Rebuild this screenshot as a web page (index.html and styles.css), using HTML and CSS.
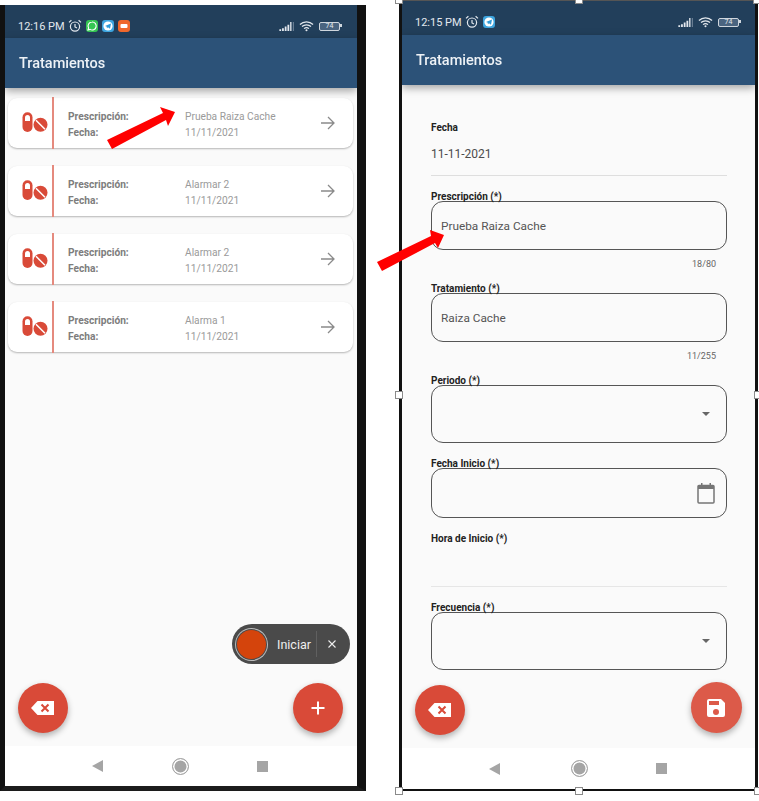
FILE: index.html
```html
<!DOCTYPE html>
<html lang="en">
<head>
  <meta charset="UTF-8">
  <meta name="viewport" content="width=device-width, initial-scale=1.0">
  <title>Tratamientos</title>
  <link rel="stylesheet" href="styles.css">
</head>
<body>
<div class="sheet">

  <div class="phone phone-list">
    <div class="status-bar">
      <span class="clock">12:16 PM</span>
      <svg class="alarm" viewBox="0 0 14 14"><circle cx="7" cy="7.600" r="4.600" fill="none" stroke="#e3e8ee" stroke-width="1.200"/><path d="M7 5v3l2 1M1 3.400 3.400 1.200M13 3.400 10.600 1.200" fill="none" stroke="#e3e8ee" stroke-width="1.200"/></svg>
      <span class="app-dot app-green"><svg viewBox="0 0 12 12"><path d="M6 2a4 4 0 0 0-3.400 6L2 10l2.100-.6A4 4 0 1 0 6 2z" fill="none" stroke="#fff" stroke-width="1.100"/></svg></span>
      <span class="app-dot app-blue"><svg viewBox="0 0 12 12"><circle cx="6" cy="6" r="4.600" fill="#fff"/><path d="M3 6l6-2.400-1 5.200-2-1.500-1 1-.4-1.700z" fill="#2f9bd8"/></svg></span>
      <span class="app-dot app-orange"><svg viewBox="0 0 12 12"><rect x="2.500" y="4" width="7" height="4" rx="1" fill="#fff"/></svg></span>
      <span class="status-right">
        <svg class="signal" viewBox="0 0 17 10"><path d="M0 8h2v2H0zM3 7h2v3H3zM6 5h2v5H6zM9 3h2v7H9zM12 0h1.500v10H12z" fill="#e3e8ee"/><path d="M15 0h1v10h-1z" fill="#7f92a5"/></svg>
        <svg class="wifi" viewBox="0 0 16 12"><path d="M1 4.400a10 10 0 0 1 14 0M3.200 6.600a7 7 0 0 1 9.600 0M5.400 8.800a4 4 0 0 1 5.200 0" fill="none" stroke="#e3e8ee" stroke-width="1.300"/><circle cx="8" cy="10.600" r="1.100" fill="#e3e8ee"/></svg>
        <span class="battery">74</span>
      </span>
    </div>
    <header class="app-bar">Tratamientos</header>

    <main class="content list-content">
      <div class="card">
        <div class="card-icon"><svg class="pills" viewBox="0 0 26 20"><use href="#pills"/></svg></div>
        <div class="card-labels"><b>Prescripción:</b><b>Fecha:</b></div>
        <div class="card-values"><span>Prueba Raiza Cache</span><span>11/11/2021</span></div>
        <svg class="go" viewBox="0 0 16 16"><use href="#go"/></svg>
      </div>
      <div class="card">
        <div class="card-icon"><svg class="pills" viewBox="0 0 26 20"><use href="#pills"/></svg></div>
        <div class="card-labels"><b>Prescripción:</b><b>Fecha:</b></div>
        <div class="card-values"><span>Alarmar 2</span><span>11/11/2021</span></div>
        <svg class="go" viewBox="0 0 16 16"><use href="#go"/></svg>
      </div>
      <div class="card">
        <div class="card-icon"><svg class="pills" viewBox="0 0 26 20"><use href="#pills"/></svg></div>
        <div class="card-labels"><b>Prescripción:</b><b>Fecha:</b></div>
        <div class="card-values"><span>Alarmar 2</span><span>11/11/2021</span></div>
        <svg class="go" viewBox="0 0 16 16"><use href="#go"/></svg>
      </div>
      <div class="card">
        <div class="card-icon"><svg class="pills" viewBox="0 0 26 20"><use href="#pills"/></svg></div>
        <div class="card-labels"><b>Prescripción:</b><b>Fecha:</b></div>
        <div class="card-values"><span>Alarma 1</span><span>11/11/2021</span></div>
        <svg class="go" viewBox="0 0 16 16"><use href="#go"/></svg>
      </div>

      <div class="timer">
        <span class="timer-record"></span>
        <span class="timer-text">Iniciar</span>
        <svg class="timer-close" viewBox="0 0 10 10"><path d="M1.500 1.500l7 7M8.500 1.500l-7 7" stroke="#eee" stroke-width="1.100" fill="none"/></svg>
      </div>
      <button class="fab fab-left-list"><svg viewBox="0 0 24 24"><use href="#backspace"/></svg></button>
      <button class="fab fab-right-list"><svg viewBox="0 0 24 24"><path d="M12 5.500v13M5.500 12h13" stroke="#fff" stroke-width="2" fill="none"/></svg></button>
    </main>

    <nav class="nav-bar nav-list">
      <span class="nav-back"></span>
      <span class="nav-home"></span>
      <span class="nav-square"></span>
    </nav>
  </div>

  <div class="phone phone-form">
    <div class="status-bar">
      <span class="clock">12:15 PM</span>
      <svg class="alarm" viewBox="0 0 14 14"><circle cx="7" cy="7.600" r="4.600" fill="none" stroke="#e3e8ee" stroke-width="1.200"/><path d="M7 5v3l2 1M1 3.400 3.400 1.200M13 3.400 10.600 1.200" fill="none" stroke="#e3e8ee" stroke-width="1.200"/></svg>
      <span class="app-dot app-blue"><svg viewBox="0 0 12 12"><circle cx="6" cy="6" r="4.600" fill="#fff"/><path d="M3 6l6-2.400-1 5.200-2-1.500-1 1-.4-1.700z" fill="#2f9bd8"/></svg></span>
      <span class="status-right">
        <svg class="signal" viewBox="0 0 17 10"><path d="M0 8h2v2H0zM3 7h2v3H3zM6 5h2v5H6zM9 3h2v7H9zM12 0h1.500v10H12z" fill="#e3e8ee"/><path d="M15 0h1v10h-1z" fill="#7f92a5"/></svg>
        <svg class="wifi" viewBox="0 0 16 12"><path d="M1 4.400a10 10 0 0 1 14 0M3.200 6.600a7 7 0 0 1 9.600 0M5.400 8.800a4 4 0 0 1 5.200 0" fill="none" stroke="#e3e8ee" stroke-width="1.300"/><circle cx="8" cy="10.600" r="1.100" fill="#e3e8ee"/></svg>
        <span class="battery">74</span>
      </span>
    </div>
    <header class="app-bar">Tratamientos</header>

    <main class="content form-content">
      <label class="field-label">Fecha</label>
      <div class="plain-value">11-11-2021</div>
      <hr class="rule">

      <label class="field-label gap-top">Prescripción (*)</label>
      <div class="box">Prueba Raiza Cache</div>
      <div class="counter">18/80</div>

      <label class="field-label gap-small">Tratamiento (*)</label>
      <div class="box">Raiza Cache</div>
      <div class="counter">11/255</div>

      <label class="field-label gap-small">Periodo (*)</label>
      <div class="box box-tall"><span class="caret"></span></div>

      <label class="field-label gap-top">Fecha Inicio (*)</label>
      <div class="box box-date">
        <svg class="calendar" viewBox="0 0 20 22"><path d="M3 3.500h14a1 1 0 0 1 1 1V20a1 1 0 0 1-1 1H3a1 1 0 0 1-1-1V4.500a1 1 0 0 1 1-1z" fill="none" stroke="#757575" stroke-width="1.500"/><path d="M2 3.500h16v3.500H2zM5 1h1.500v3H5zM13.500 1H15v3h-1.500z" fill="#757575"/></svg>
      </div>

      <label class="field-label gap-top">Hora de Inicio (*)</label>
      <hr class="rule rule-hour">

      <label class="field-label gap-top">Frecuencia (*)</label>
      <div class="box box-tall"><span class="caret"></span></div>

      <button class="fab fab-left-form"><svg viewBox="0 0 24 24"><use href="#backspace"/></svg></button>
      <button class="fab fab-save"><svg viewBox="0 0 24 24"><path d="M17 3H5a2 2 0 0 0-2 2v14a2 2 0 0 0 2 2h14a2 2 0 0 0 2-2V7zm-5 16a3 3 0 1 1 0-6 3 3 0 0 1 0 6zm3-10H5V5h10z" fill="#fff"/></svg></button>
    </main>

    <nav class="nav-bar nav-form">
      <span class="nav-back"></span>
      <span class="nav-home"></span>
      <span class="nav-square"></span>
    </nav>
  </div>

  <!-- drawn over the screenshots -->
  <svg class="overlay" viewBox="0 0 759 801">
    <path d="M107 140 163 113 160 107 175 112 168 126 166 120 112 149z" fill="#f00"/>
    <path d="M377 262 431 236 430 230 444 235 438 248 435 243 382 271z" fill="#f00"/>
  </svg>
  <i class="handle handle-a"></i>
  <i class="handle handle-b"></i>
  <i class="handle handle-c"></i>
  <i class="handle handle-d"></i>
  <i class="handle handle-e"></i>
  <i class="handle handle-f"></i>
  <i class="handle handle-g"></i>
  <i class="handle handle-h"></i>
</div>

<svg class="defs" width="0" height="0">
  <defs>
    <g id="pills">
      <path d="M.5 5.200a5 5 0 0 1 10 0V15a5 5 0 0 1-10 0z" fill="#d94a38"/>
      <path d="M3 5.500a2.500 2.500 0 0 1 5 0V9H3z" fill="#fff"/>
      <circle cx="18.500" cy="12.800" r="7" fill="#d94a38"/>
      <path d="M14 8.300l9 9" stroke="#fff" stroke-width="1.500"/>
    </g>
    <path id="go" d="M1 8h13M8 2l6 6-6 6" fill="none" stroke="#8a8a8a" stroke-width="1.300"/>
    <g id="backspace">
      <path d="M23 5H6.500L0 12l6.500 7H23z" fill="#fff"/>
      <path d="M10.500 8.500l7 7M17.500 8.500l-7 7" stroke="#d94a38" stroke-width="2"/>
    </g>
  </defs>
</svg>
</body>
</html>
```

FILE: styles.css
```css
*{
  box-sizing: border-box;
}
html, body{
  margin: 0;
  padding: 0;
  background: #fff;
}
body{
  font-family: Roboto, "Liberation Sans", sans-serif;
}
.sheet{
  position: relative;
  width: 759px;
  height: 801px;
  overflow: hidden;
  display: flex;
  align-items: flex-start;
}
.defs{
  position: absolute;
}

/* phones */
.phone{
  display: flex;
  flex-direction: column;
  overflow: hidden;
  filter: blur(0.4px);
}
.phone-list{
  width: 366px;
  height: 786px;
  margin-top: 5px;
  border-left: 5px solid #111;
  border-right: 9px solid #111;
  border-bottom: 5px solid #1c1c1c;
}
.phone-form{
  width: 359px;
  height: 791px;
  margin-left: 33px;
  margin-top: 0;
  border: 3px solid #111;
  border-top: 1px solid #555;
  border-bottom: 2px solid #111;
}
.status-bar{
  height: 33px;
  flex: none;
  display: flex;
  align-items: center;
  padding: 9px 15px 0 13px;
  background: #223f5b;
  color: #e3e8ee;
  font-size: 11px;
}
.phone-form .status-bar{
  height: 34px;
  padding: 8px 14px 0 13px;
}
.clock{
  margin-right: 3px;
}
.alarm{
  width: 14px;
  height: 14px;
  margin-right: 4px;
}
.app-dot{
  width: 12px;
  height: 12px;
  margin-right: 4px;
  border-radius: 3px;
  display: block;
}
.app-dot svg{
  display: block;
}
.app-green{
  background: #35c653;
}
.app-blue{
  background: #3ea6e0;
}
.app-orange{
  background: #f0682c;
}
.status-right{
  margin-left: auto;
  display: flex;
  align-items: center;
  gap: 4px;
}
.signal{
  width: 16px;
  height: 9px;
}
.wifi{
  width: 15px;
  height: 12px;
}
.battery{
  position: relative;
  width: 21px;
  height: 9px;
  margin-left: 1px;
  margin-right: 2px;
  border: 1px solid #cfd6dd;
  border-radius: 2px;
  color: #e3e8ee;
  background: #4a6480;
  font-size: 7px;
  line-height: 7px;
  text-align: center;
}
.battery::after{
  content: "";
  position: absolute;
  right: -3px;
  top: 1px;
  width: 2px;
  height: 3px;
  background: #cfd6dd;
}
.app-bar{
  height: 50px;
  flex: none;
  position: relative;
  z-index: 2;
  padding: 17px 14px 0;
  background: #2c5278;
  color: #eef2f6;
  font-size: 14.500px;
  font-weight: 500;
  line-height: 18px;
  box-shadow: 0 3px 8px rgba(0, 0, 0, 0.35);
}
.content{
  flex: 1;
  position: relative;
  background: #fafafa;
}
.nav-bar{
  height: 40px;
  flex: none;
  position: relative;
  background: #fff;
  display: flex;
  align-items: center;
}
.nav-list{
  padding-left: 87px;
}
.nav-form{
  height: 41px;
  padding-left: 87px;
}
.nav-back{
  width: 0;
  height: 0;
  border-top: 6px solid transparent;
  border-bottom: 6px solid transparent;
  border-right: 11px solid #a5a5a5;
}
.nav-home{
  width: 17px;
  height: 17px;
  margin-left: 69px;
  border: 1.500px solid #a5a5a5;
  border-radius: 50%;
  background: #a5a5a5;
  box-shadow: inset 0 0 0 1.500px #fff;
}
.nav-form .nav-home{
  margin-left: 71px;
}
.nav-square{
  width: 11px;
  height: 11px;
  margin-left: 68px;
  background: #a5a5a5;
}

/* list */
.list-content{
  padding: 10px 4px 0 3px;
}
.card{
  height: 50px;
  margin-bottom: 18px;
  display: flex;
  align-items: center;
  background: #fff;
  border-radius: 9px;
  box-shadow: 0 1px 2px rgba(0, 0, 0, 0.28);
}
.card-icon{
  width: 46px;
  height: 52px;
  flex: none;
  padding: 15px 0 0 14px;
  border-right: 2px solid #e58a7e;
}
.pills{
  display: block;
  width: 26px;
  height: 20px;
}
.card-labels, .card-values{
  display: flex;
  flex-direction: column;
  gap: 1px;
  margin-top: 2px;
  font-size: 10.200px;
  line-height: 15px;
}
.card-labels{
  width: 117px;
  margin-left: 14px;
  color: #7d7d7d;
}
.card-values{
  width: 135px;
  color: #9a9a9a;
}
.go{
  width: 16px;
  height: 16px;
  flex: none;
}
.timer{
  position: absolute;
  left: 227px;
  top: 536px;
  width: 118px;
  height: 40px;
  display: flex;
  align-items: center;
  padding-left: 4px;
  border-radius: 20px;
  background: #4a4a4a;
  color: #eee;
}
.timer-record{
  width: 29px;
  height: 29px;
  border-radius: 50%;
  background: #d4440c;
  box-shadow: 0 0 0 1px #4a4a4a, 0 0 0 2px #bbb;
  margin-left: 1px;
}
.timer-text{
  height: 26px;
  margin-left: 11px;
  padding: 2px 5px 0 0;
  font-size: 12.500px;
  line-height: 24px;
  border-right: 1px solid #606060;
}
.timer-close{
  width: 10px;
  height: 10px;
  margin-left: 10px;
}
.fab{
  position: absolute;
  width: 50px;
  height: 50px;
  padding: 13px;
  border: 0;
  border-radius: 50%;
  background: #d94a38;
  box-shadow: 0 3px 6px rgba(0, 0, 0, 0.3);
}
.fab svg{
  display: block;
  width: 24px;
  height: 24px;
}
.fab-left-list{
  left: 13px;
  top: 595px;
}
.fab-right-list{
  left: 288px;
  top: 595px;
}
.fab-left-form{
  left: 13px;
  top: 600px;
}
.fab-save{
  left: 289px;
  top: 597px;
  width: 51px;
  height: 51px;
  background: #dc5a49;
}

/* form */
.form-content{
  padding: 37px 28px 0 29px;
}
.field-label{
  display: block;
  color: #222;
  font-size: 10px;
  font-weight: 700;
  line-height: 12px;
}
.gap-top{
  margin-top: 15px;
}
.gap-small{
  margin-top: 13px;
}
.plain-value{
  margin-top: 12px;
  color: #4c4c4c;
  font-size: 12px;
  line-height: 16px;
}
.rule{
  height: 1px;
  margin: 13px 0 0;
  border: 0;
  background: #dedede;
}
.rule-hour{
  margin-top: 41px;
  background: #e6e6e6;
}
.box{
  height: 49px;
  margin-top: -2px;
  padding: 0 10px 0 9px;
  display: flex;
  align-items: center;
  border: 1.300px solid #555;
  border-radius: 12px;
  color: #555;
  font-size: 11.800px;
}
.box-date{
  height: 50px;
}
.box-tall{
  height: 58px;
}
.caret{
  width: 0;
  height: 0;
  margin-left: auto;
  margin-right: 6px;
  border-left: 4.500px solid transparent;
  border-right: 4.500px solid transparent;
  border-top: 4.500px solid #666;
}
.calendar{
  width: 20px;
  height: 22px;
  margin-left: auto;
}
.counter{
  margin-top: 8px;
  padding-right: 11px;
  color: #666;
  font-size: 9px;
  line-height: 12px;
  text-align: right;
}

/* annotations */
.overlay{
  position: absolute;
  left: 0;
  top: 0;
  width: 759px;
  height: 801px;
  pointer-events: none;
}
.handle{
  position: absolute;
  width: 8px;
  height: 8px;
  background: #fff;
  border: 1px solid #8a8a8a;
}
.handle-a{ left: 395px; top: -4px; }
.handle-b{ left: 575px; top: -4px; }
.handle-c{ left: 753px; top: -4px; }
.handle-d{ left: 395px; top: 391px; }
.handle-e{ left: 754px; top: 391px; }
.handle-f{ left: 395px; top: 787px; }
.handle-g{ left: 575px; top: 787px; }
.handle-h{ left: 754px; top: 787px; }
```
